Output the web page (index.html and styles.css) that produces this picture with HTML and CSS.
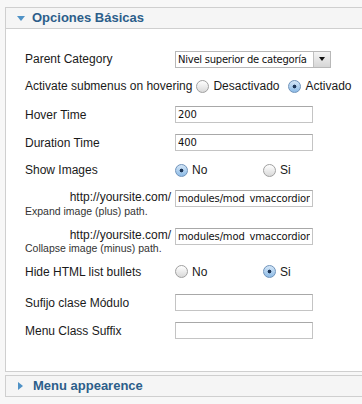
FILE: index.html
```html
<!DOCTYPE html>
<html>
<head>
  <meta charset="UTF-8">
  <title>Opciones Básicas</title>
  <link rel="stylesheet" href="styles.css">
</head>
<body>
  <div class="panel">
    <h3 class="panel-title"><span class="arrow-down"></span>Opciones Básicas</h3>
    <div class="panel-body">
      <div class="row r1">
        <label>Parent Category</label>
        <div class="select"><span class="select-text">Nivel superior de categoría</span><span class="select-btn"><span class="tri"></span></span></div>
      </div>
      <div class="row r2 wide">
        <label>Activate submenus on hovering</label>
        <span class="opt"><input type="radio" name="hover"> Desactivado</span>
        <span class="opt"><input type="radio" name="hover" checked> Activado</span>
      </div>
      <div class="row r3">
        <label>Hover Time</label>
        <input type="text" value="200">
      </div>
      <div class="row r4">
        <label>Duration Time</label>
        <input type="text" value="400">
      </div>
      <div class="row r5">
        <label>Show Images</label>
        <div class="radios">
          <span class="opt fixed"><input type="radio" name="images" checked> No</span>
          <span class="opt"><input type="radio" name="images"> Si</span>
        </div>
      </div>
      <div class="row r6 path">
        <label><span class="site">http://yoursite.com/</span><span class="hint">Expand image (plus) path.</span></label>
        <input type="text" value="modules/mod_vmaccordion/">
      </div>
      <div class="row r7 path">
        <label><span class="site">http://yoursite.com/</span><span class="hint tight">Collapse image (minus) path.</span></label>
        <input type="text" value="modules/mod_vmaccordion/">
      </div>
      <div class="row r8">
        <label>Hide HTML list bullets</label>
        <div class="radios">
          <span class="opt fixed"><input type="radio" name="bullets"> No</span>
          <span class="opt"><input type="radio" name="bullets" checked> Si</span>
        </div>
      </div>
      <div class="row r9">
        <label>Sufijo clase Módulo</label>
        <input type="text" value="">
      </div>
      <div class="row r10">
        <label>Menu Class Suffix</label>
        <input type="text" value="">
      </div>
    </div>
  </div>

  <div class="panel closed">
    <h3 class="panel-title"><span class="arrow-right"></span>Menu appearence</h3>
  </div>
</body>
</html>
```

FILE: styles.css
```css
body {
  margin: 0;
  padding: 7px 0 0 5px;
  background: #f7f7f7;
  font-family: "Liberation Sans", Arial, sans-serif;
  font-size: 12px;
  color: #1a1a1a;
  overflow: hidden;
}
.panel {
  border: 1px solid #cfcfcf;
  margin-right: -40px;
  background: #fff;
}
.panel.closed {
  margin-top: 3px;
}
.panel-title {
  margin: 0;
  height: 20px;
  line-height: 20px;
  background: #f5f5f5;
  color: #2c5e8a;
  font-size: 13px;
  font-weight: bold;
  padding-left: 11px;
  display: flex;
  align-items: center;
}
.panel-body {
  border-top: 1px solid #cfcfcf;
  padding: 17px 0 27px 19px;
}
.arrow-down {
  width: 0;
  height: 0;
  border-left: 4px solid transparent;
  border-right: 4px solid transparent;
  border-top: 5px solid #4f92c6;
  margin-right: 7px;
  margin-top: 1px;
}
.arrow-right {
  width: 0;
  height: 0;
  border-top: 4px solid transparent;
  border-bottom: 4px solid transparent;
  border-left: 5px solid #4f92c6;
  margin-right: 10px;
  margin-left: 1px;
}
.row {
  box-sizing: border-box;
  display: grid;
  grid-template-columns: 150px auto;
  align-items: center;
}
.row.wide {
  display: flex;
}
.r1 { height: 26px; }
.r2 { height: 28px; }
.r3 { height: 29px; }
.r4 { height: 27px; }
.r5 { height: 28px; }
.r6 { height: 34px; padding-top: 6px; }
.r7 { height: 37px; padding-top: 10px; }
.r8 { height: 33px; }
.r9 { height: 29px; }
.r10 { height: 27px; }
.path {
  align-items: start;
}
.path label {
  display: flex;
  flex-direction: column;
  align-items: stretch;
  padding-right: 4px;
}
.path .site {
  text-align: right;
  line-height: 14px;
}
.path .hint {
  font-size: 10.5px;
  line-height: 14px;
  color: #333;
}
.path .hint.tight {
  line-height: 12px;
}
input[type="text"] {
  box-sizing: border-box;
  width: 138px;
  height: 17px;
  margin: 0;
  padding: 0 2px;
  border: 1px solid #c4c4c4;
  border-top-color: #a8a8a8;
  font-family: "DejaVu Sans", Verdana, sans-serif;
  font-size: 10px;
  letter-spacing: -0.15px;
  color: #111;
  background: #fff;
}
.select {
  box-sizing: border-box;
  width: 156px;
  height: 17px;
  border: 1px solid #b8b8b8;
  display: flex;
  align-items: center;
  font-family: "DejaVu Sans", Verdana, sans-serif;
  font-size: 10px;
  letter-spacing: -0.25px;
  color: #111;
}
.select-text {
  flex: 1;
  padding-left: 2px;
  white-space: nowrap;
  overflow: hidden;
}
.select-btn {
  width: 16px;
  height: 15px;
  background: linear-gradient(#f4f4f4, #d6d6d6);
  border-left: 1px solid #c0c0c0;
  display: flex;
  align-items: center;
  justify-content: center;
}
.tri {
  border-left: 3px solid transparent;
  border-right: 3px solid transparent;
  border-top: 4px solid #111;
}
.radios {
  display: flex;
}
.opt {
  display: inline-flex;
  align-items: center;
  white-space: nowrap;
}
.wide label {
  margin-right: 4px;
}
.wide .opt {
  margin-right: 9px;
}
.opt.fixed {
  width: 88px;
}
input[type="radio"] {
  appearance: none;
  -webkit-appearance: none;
  box-sizing: border-box;
  width: 13px;
  height: 13px;
  margin: 0 4px 0 0;
  border-radius: 50%;
  border: 1px solid #a0a0a0;
  background: linear-gradient(#ffffff, #d9d9d9);
}
input[type="radio"]:checked {
  border-color: #6f93bb;
  background: radial-gradient(circle, #1d3557 0 1.6px, transparent 2.2px), linear-gradient(#d4e6f7, #8dbbe6);
}
```
